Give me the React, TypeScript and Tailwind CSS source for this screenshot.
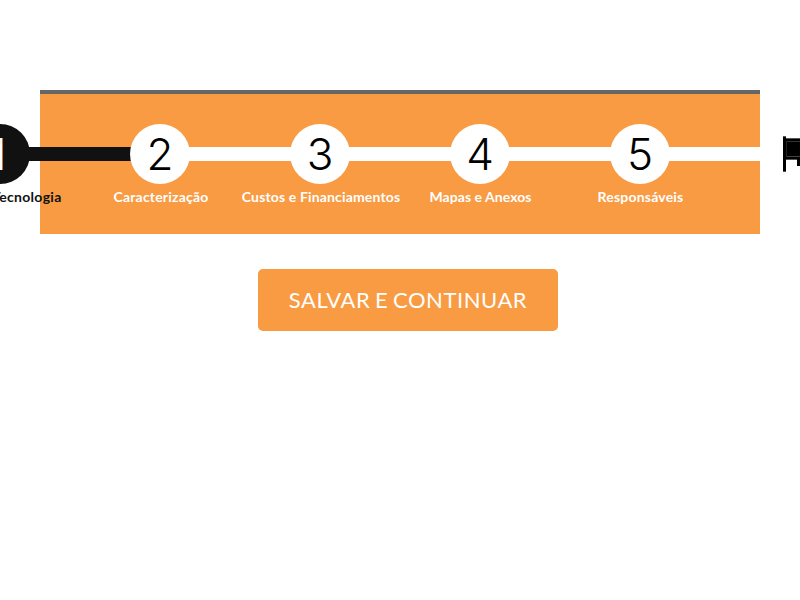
type Step = { id: string; label: string; spacing: string; done?: boolean };

const steps: Step[] = [
  { id: '1', label: 'Dados da Tecnologia', spacing: 'tracking-[0.3px] -ml-[10px]', done: true },
  { id: '2', label: 'Caracterização', spacing: 'tracking-[0.2px] ml-[2px]' },
  { id: '3', label: 'Custos e Financiamentos', spacing: 'tracking-[0.15px] ml-[2px]' },
  { id: '4', label: 'Mapas e Anexos', spacing: 'tracking-[0.05px] ml-px' },
  { id: '5', label: 'Responsáveis', spacing: 'tracking-[0.2px] ml-px' },
];

function FlagIcon() {
  return (
    <svg width="34" height="36" viewBox="0 0 34 36" shapeRendering="crispEdges" aria-hidden="true">
      <rect x="0" y="0" width="3" height="36" fill="#000" />
      <rect x="0" y="0" width="3" height="1" fill="#555" />
      <rect x="0" y="35" width="3" height="1" fill="#555" />
      <path d="M3 2H20V7H34V30H14V24H3Z" fill="#000" />
      <rect x="3" y="2" width="17" height="1" fill="#555" />
      <rect x="3" y="5" width="17" height="1" fill="#333" />
      <rect x="3" y="20" width="17" height="1" fill="#444" />
      <rect x="3" y="23" width="11" height="1" fill="#555" />
      <rect x="3" y="5" width="1" height="16" fill="#222" />
    </svg>
  );
}

function StepItem({ step }: { step: Step }) {
  return (
    <li className="flex w-40 shrink-0 flex-col items-center">
      <div className="flex h-[60px] w-full items-center">
        <span className={`h-3.5 flex-1 ${step.done || step.id === '2' ? 'bg-[#111]' : 'bg-white'}`} />
        <span
          className={`-mx-px flex size-[60px] items-center justify-center rounded-full font-['Inter',sans-serif] text-[44px] font-[350] leading-none ${
            step.done ? 'bg-[#111] pr-1 text-white' : 'bg-white text-black'
          }`}
        >
          {step.id}
        </span>
        <span className={`h-3.5 flex-1 ${step.done ? 'bg-[#111]' : 'bg-white'}`} />
      </div>
      <span
        className={`mt-1 whitespace-nowrap text-sm font-bold leading-[18px] ${step.spacing} ${
          step.done ? 'text-[#111]' : 'text-white'
        }`}
      >
        {step.label}
      </span>
    </li>
  );
}

export default function App() {
  return (
    <main className="h-[600px] w-[800px] overflow-hidden bg-white pt-[90px] font-['Lato',sans-serif]">
      <nav className="mx-10 h-36 border-t-4 border-[#666] bg-[#f99b43] pt-[30px]">
        <ol className="-ml-[120px] flex w-[1000px]">
          {steps.map((step) => (
            <StepItem key={step.id} step={step} />
          ))}
          <li className="flex w-40 shrink-0 items-start">
            <span className="mt-[23px] h-3.5 w-10 bg-white" />
            <span className="ml-[23px] mt-3">
              <FlagIcon />
            </span>
          </li>
        </ol>
      </nav>
      <button className="ml-[258px] mt-[35px] flex h-[62px] w-[300px] items-center justify-center rounded-[5px] bg-[#f99b43] pb-0.5 text-[22px] font-normal tracking-[0.55px] text-white [word-spacing:-1.5px]">
        SALVAR E CONTINUAR
      </button>
    </main>
  );
}
